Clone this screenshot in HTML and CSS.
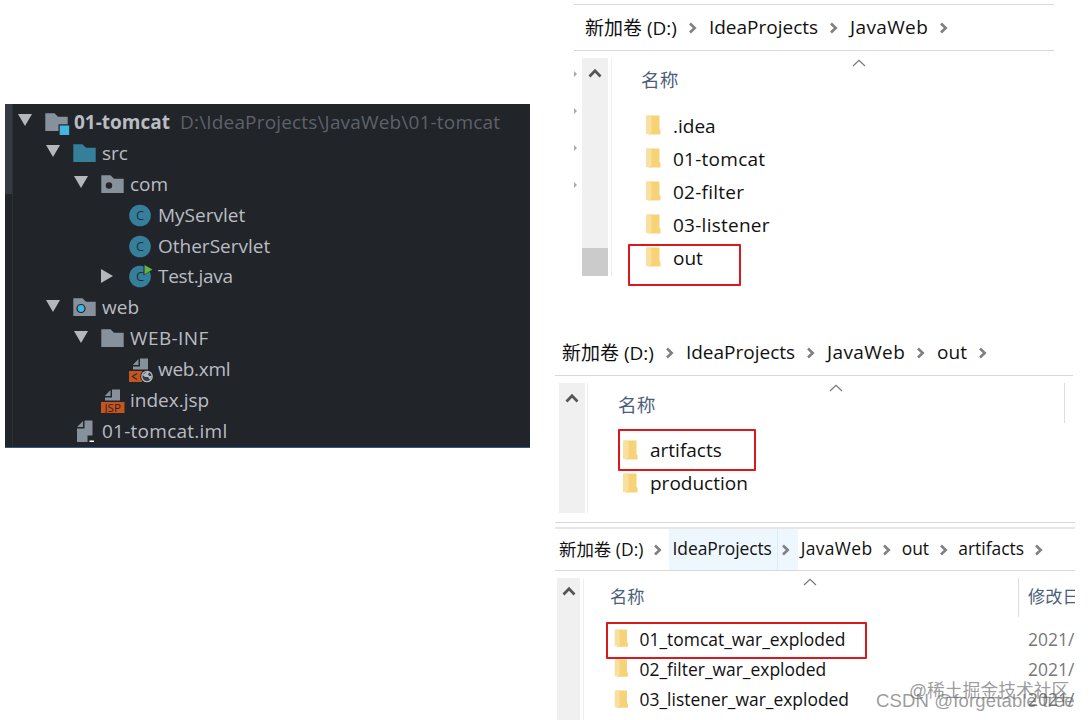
FILE: index.html
```html
<!DOCTYPE html>
<html lang="zh">
<head>
    <meta charset="UTF-8">
    <meta name="viewport" content="width=device-width, initial-scale=1.0">
    <title>01-tomcat</title>
    <link rel="stylesheet" href="styles.css">
</head>
<body>
    <!-- Icons -->
    <svg class="defs">
        <symbol id="down" viewBox="0 0 14 14"><path d="M0 1h14L7 13z" fill="#b4b8bc"/></symbol>
        <symbol id="right" viewBox="0 0 14 14"><path d="M0 0v14l12-7z" fill="#b4b8bc"/></symbol>
        <symbol id="dir" viewBox="0 0 24 24"><path d="M.3 3.3H9.500l3.500 3.500h9.700V21H.3z"/></symbol>
        <symbol id="class" viewBox="0 0 24 24">
            <circle cx="11" cy="12.500" r="10.800" fill="#357f9b"/>
            <text x="11" y="17.200" font-size="13" text-anchor="middle" fill="#20303a">C</text>
        </symbol>
        <symbol id="doc" viewBox="0 0 24 24"><path d="M11 1.500h8V12.500H4V9.500h7zM9.500 2v6H3.800z"/></symbol>
        <symbol id="folder" viewBox="0 0 15 21">
            <path d="M1 .500h12.500V14l1 1v4.500H3z" fill="#f5d376"/>
            <path d="M0 .500h3l2.500 1.500V17L3 20.800 2.500 19H0z" fill="#f9e0a0"/>
        </symbol>
        <symbol id="chev" viewBox="0 0 8 12"><path d="M1 1.500L5.700 6 1 10.500" fill="none" stroke="#808080" stroke-width="2.600"/></symbol>
        <symbol id="up" viewBox="0 0 14 10"><path d="M1.500 8.500L7 2.800l5.500 5.700" fill="none" stroke="#555" stroke-width="2.700"/></symbol>
        <symbol id="caret" viewBox="0 0 14 8"><path d="M1 7l6-5.700L13 7" fill="none" stroke="#777" stroke-width="1.200"/></symbol>
    </svg>

    <div class="container">
        <!-- Project tree -->
        <section class="project">
            <ul class="tree">
                <li>
                    <svg class="arrow"><use href="#down"/></svg>
                    <svg class="icon"><use href="#dir"/><path d="M13.500 14.300H24V24H13.500z" fill="#212429"/><path d="M14.700 15.500h9.500V25h-9.500z" fill="#40b6e0"/></svg>
                    <b>01-tomcat</b><span class="path">D:\IdeaProjects\JavaWeb\01-tomcat</span>
                </li>
                <li class="l1">
                    <svg class="arrow"><use href="#down"/></svg>
                    <svg class="icon source"><use href="#dir"/></svg>
                    <span>src</span>
                </li>
                <li class="l2">
                    <svg class="arrow"><use href="#down"/></svg>
                    <svg class="icon"><use href="#dir"/><circle cx="8" cy="13.500" r="3.200" fill="#212429"/></svg>
                    <span>com</span>
                </li>
                <li class="l3"><i class="arrow"></i><svg class="icon"><use href="#class"/></svg><span>MyServlet</span></li>
                <li class="l3"><i class="arrow"></i><svg class="icon"><use href="#class"/></svg><span>OtherServlet</span></li>
                <li class="l3">
                    <svg class="arrow closed"><use href="#right"/></svg>
                    <svg class="icon"><use href="#class"/><path d="M14.500 0v11.500L24 5.500z" fill="#212429"/><path d="M15.500 1v9.500l8-5z" fill="#62b543"/></svg>
                    <span class="java">Test.java</span>
                </li>
                <li class="l1">
                    <svg class="arrow"><use href="#down"/></svg>
                    <svg class="icon"><use href="#dir"/><circle cx="8" cy="13.500" r="4" fill="#40b6e0" stroke="#212429" stroke-width="1.200"/></svg>
                    <span>web</span>
                </li>
                <li class="l2">
                    <svg class="arrow"><use href="#down"/></svg>
                    <svg class="icon"><use href="#dir"/></svg>
                    <span class="inf">WEB-INF</span>
                </li>
                <li class="l3">
                    <i class="arrow"></i>
                    <svg class="icon">
                        <use href="#doc"/>
                        <path d="M0 14h13v11H0z" fill="#c4551f"/>
                        <path d="M8 16.500l-4.500 3L8 22.500" fill="none" stroke="#3a2a22" stroke-width="1.300"/>
                        <circle cx="18" cy="19.500" r="6.700" fill="#212429"/>
                        <circle cx="18" cy="19.500" r="5.200" fill="#343a41" stroke="#b2b8be" stroke-width="1.300"/>
                        <path d="M13.500 18l4-3h3l-1.500 2.500 1.500 1.500h2.500l-2 4-2-3h-3z" fill="#b2b8be"/>
                    </svg>
                    <span class="xml">web.xml</span>
                </li>
                <li class="l2">
                    <i class="arrow"></i>
                    <svg class="icon">
                        <use href="#doc"/>
                        <path d="M0 14h23.500v11H0z" fill="#c4551f"/>
                        <text x="11.700" y="23.500" font-size="11.500" text-anchor="middle" fill="#33231c">JSP</text>
                    </svg>
                    <span>index.jsp</span>
                </li>
                <li class="l1">
                    <i class="arrow"></i>
                    <svg class="icon"><path d="M11.500 1.500h8v15h-5V23H4V9.500h7.500zM10 2v6H4z"/><path d="M16.500 21.500h4.500v1.500h-4.500z" fill="#fff"/></svg>
                    <span class="iml">01-tomcat.iml</span>
                </li>
            </ul>
        </section>

        <!-- Explorer windows -->
        <div class="windows">
            <section class="window first">
                <nav>
                    <span>新加卷 (D:)</span><svg><use href="#chev"/></svg>
                    <span>IdeaProjects</span><svg><use href="#chev"/></svg>
                    <span class="jw">JavaWeb</span><svg><use href="#chev"/></svg>
                </nav>
                <div class="content">
                    <div class="ticks"><i></i><i></i><i></i><i></i></div>
                    <div class="scroll"><svg><use href="#up"/></svg><div class="thumb"></div></div>
                    <div class="files">
                        <h2>名称</h2>
                        <svg class="caret"><use href="#caret"/></svg>
                        <ul>
                            <li><svg><use href="#folder"/></svg>.idea</li>
                            <li><svg><use href="#folder"/></svg><span class="wide">01-tomcat</span></li>
                            <li><svg><use href="#folder"/></svg><span class="wide">02-filter</span></li>
                            <li><svg><use href="#folder"/></svg><span class="wide">03-listener</span></li>
                            <li class="marked"><svg><use href="#folder"/></svg>out</li>
                        </ul>
                    </div>
                </div>
            </section>

            <section class="window second">
                <nav>
                    <span>新加卷 (D:)</span><svg><use href="#chev"/></svg>
                    <span>IdeaProjects</span><svg><use href="#chev"/></svg>
                    <span class="jw">JavaWeb</span><svg><use href="#chev"/></svg>
                    <span>out</span><svg><use href="#chev"/></svg>
                </nav>
                <div class="content">
                    <div class="scroll"><svg><use href="#up"/></svg></div>
                    <div class="files">
                        <h2>名称</h2>
                        <svg class="caret"><use href="#caret"/></svg>
                        <ul>
                            <li class="marked"><svg><use href="#folder"/></svg>artifacts</li>
                            <li><svg><use href="#folder"/></svg>production</li>
                        </ul>
                    </div>
                    <div class="column"></div>
                </div>
            </section>

            <section class="window third">
                <nav>
                    <span>新加卷 (D:)</span><svg><use href="#chev"/></svg>
                    <div class="hover"><span>IdeaProjects</span><svg><use href="#chev"/></svg></div>
                    <span class="jw">JavaWeb</span><svg><use href="#chev"/></svg>
                    <span>out</span><svg><use href="#chev"/></svg>
                    <span>artifacts</span><svg><use href="#chev"/></svg>
                </nav>
                <div class="content">
                    <div class="scroll"><svg><use href="#up"/></svg></div>
                    <div class="files">
                        <h2>名称</h2>
                        <svg class="caret"><use href="#caret"/></svg>
                        <ul>
                            <li class="marked"><svg><use href="#folder"/></svg>01_tomcat_war_exploded</li>
                            <li><svg><use href="#folder"/></svg>02_filter_war_exploded</li>
                            <li><svg><use href="#folder"/></svg>03_listener_war_exploded</li>
                        </ul>
                    </div>
                    <div class="dates">
                        <h2>修改日</h2>
                        <ul>
                            <li>2021/</li>
                            <li>2021/</li>
                            <li>2021/</li>
                        </ul>
                    </div>
                </div>
            </section>
        </div>

        <div class="watermark juejin">@稀土掘金技术社区</div>
        <div class="watermark csdn">CSDN @forgetable tree</div>
    </div>
</body>
</html>
```

FILE: styles.css
```css
* {
    margin: 0;
    padding: 0;
    box-sizing: border-box;
}

body {
    font-family: "Open Sans", "Noto Sans CJK SC", sans-serif;
    font-size: 19px;
    color: #111;
    background: #fff;
}

ul {
    list-style: none;
}

svg {
    flex: none;
    overflow: visible;
}

.defs {
    display: none;
}

.container {
    position: relative;
    display: flex;
    align-items: flex-start;
    width: 1090px;
    height: 720px;
    padding-left: 5px;
    overflow: hidden;
}

/* Project tree */
.project {
    flex: none;
    width: 525px;
    height: 344px;
    margin-top: 104px;
    padding-top: 2.5px;
    background: linear-gradient(#343943, #343943) 0 0 / 7px 90px no-repeat,
                linear-gradient(#2b3036, #2b3036) 7px 0 / 1px 100% no-repeat,
                #212429;
    border-bottom: 1px solid #35578a;
    color: #b9bdc2;
}

.tree li {
    display: flex;
    align-items: center;
    height: 30.9px;
    padding-left: 13px;
    white-space: nowrap;
}

.tree .l1 {
    padding-left: 41px;
}

.tree .l2 {
    padding-left: 69px;
}

.tree .l3 {
    padding-left: 97px;
}

.arrow {
    flex: none;
    width: 14px;
    height: 14px;
    margin: -3px 13px 0 0;
}

.arrow.closed {
    margin: 0 14px 0 -1px;
}

.icon {
    width: 24px;
    height: 24px;
    margin-right: 5px;
    fill: #87919b;
}

.icon.source {
    fill: #357f9b;
}

.tree b {
    margin-right: 10px;
}

.path {
    color: #5d626a;
    letter-spacing: .17px;
}

.java,
.xml {
    letter-spacing: -.3px;
}

.inf {
    letter-spacing: .4px;
}

.iml {
    letter-spacing: .25px;
}

/* Explorer windows */
.windows {
    width: 545px;
    padding: 4px 0 0 25px;
}

.window nav {
    display: flex;
    align-items: center;
    gap: 12px;
    white-space: nowrap;
    border-bottom: 1px solid #d9d9d9;
}

.window nav svg {
    width: 8px;
    height: 12px;
    margin-top: 3px;
}

.jw {
    letter-spacing: .35px;
}

.wide {
    letter-spacing: .25px;
}

.content {
    display: flex;
}

.scroll {
    display: flex;
    flex-direction: column;
    align-items: center;
    justify-content: space-between;
    flex: none;
    width: 26px;
    background: #f0f0f0;
}

.scroll svg {
    width: 14px;
    height: 10px;
    margin-top: 10px;
}

.thumb {
    width: 100%;
    height: 28px;
    background: #cbcbcb;
}

.files {
    position: relative;
    flex: 1;
    margin-left: 3px;
    padding-left: 30px;
    border-left: 1px solid #eee;
}

.window h2 {
    height: 44px;
    font-size: 18.7px;
    font-weight: 400;
    line-height: 44px;
    color: #4c607a;
    white-space: nowrap;
}

.caret {
    position: absolute;
    top: 1px;
    width: 14px;
    height: 8px;
}

.files li {
    position: relative;
    display: flex;
    align-items: center;
    gap: 12px;
    height: 33px;
    padding-left: 5px;
    white-space: nowrap;
}

.files li svg {
    width: 15px;
    height: 21px;
}

/* Red frame around the folder being pointed out */
.marked::after {
    content: "";
    position: absolute;
    box-sizing: border-box;
    border: 2px solid #d9191c;
    border-radius: 1px;
}

.first {
    width: 480px;
    margin-left: 19px;
    border-top: 1px solid #d9d9d9;
}

.first nav {
    height: 46px;
    padding: 0 0 2px 11px;
}

.first .content {
    height: 218px;
    margin-top: 7px;
}

.first .files {
    padding-left: 29px;
}

.first ul {
    margin-top: 7px;
}

.first .caret {
    left: 240px;
}

.first .marked::after {
    top: 3px;
    left: -13px;
    width: 113px;
    height: 42px;
}

.ticks {
    display: flex;
    flex-direction: column;
    gap: 31px;
    width: 8px;
    padding-top: 13px;
}

.ticks i {
    height: 6px;
    width: 3px;
    background: #aaa;
    clip-path: polygon(0 0, 100% 50%, 0 100%);
}

.second {
    width: 518px;
    margin-top: 53px;
}

.second nav {
    height: 47px;
    padding: 0 0 1px 7px;
}

.second .content {
    height: 130px;
    margin: 7px 0 0 4px;
}

.second .files {
    margin-left: 2px;
}

.second ul {
    margin-top: 6.5px;
}

.second .caret {
    left: 241px;
}

.second .marked::after {
    top: -5px;
    left: 0;
    width: 138px;
    height: 42px;
}

.second .column {
    width: 9px;
    height: 40px;
    border-left: 1px solid #ddd;
}

.third {
    width: 520px;
    height: 198px;
    margin-top: 9px;
    padding-top: 4px;
    overflow: hidden;
    border-top: 1px solid #d9d9d9;
    font-size: 17.45px;
}

.third nav {
    height: 44px;
    padding: 0 0 3px 4px;
    gap: 10.6px;
    border-top: 2px solid #e6e6e6;
}

.hover {
    display: flex;
    align-items: center;
    gap: 10px;
    align-self: stretch;
    width: 129px;
    margin: 0 -7.5px -3px -4px;
    padding: 0 0 3px 4px;
    letter-spacing: -.08px;
    background: linear-gradient(#d9ecfa, #d9ecfa) 108px 0 / 1px 100% no-repeat, #eef7fe;
}

.third .content {
    height: 160px;
    margin: 7px 0 0 2px;
}

.third .scroll {
    width: 23px;
}

.third .scroll svg {
    margin-top: 8px;
}

.third .files {
    padding-left: 26px;
}

.third h2 {
    height: 39px;
    font-size: 17.2px;
    line-height: 38px;
}

.third ul {
    margin-top: 6.5px;
}

.third .files li {
    height: 30.3px;
    gap: 10.5px;
    padding-left: 4px;
}

.third .files li svg {
    height: 19px;
}

.third .caret {
    top: 0;
    left: 219px;
}

.third .marked::after {
    top: -2px;
    left: -4px;
    width: 261px;
    height: 37px;
}

.dates {
    flex: none;
    width: 57px;
    overflow: hidden;
    background: linear-gradient(#ddd, #ddd) 0 0 / 1px 39px no-repeat;
    padding-left: 10px;
    color: #777;
}

.dates li {
    height: 30.3px;
    line-height: 30.3px;
}

.watermark {
    position: absolute;
    color: rgba(90, 90, 90, .62);
    white-space: nowrap;
    font-family: "Liberation Sans", "Noto Sans CJK SC", sans-serif;
}

.juejin {
    top: 676px;
    left: 909px;
    font-size: 17.8px;
}

.csdn {
    top: 690px;
    left: 876px;
    font-size: 18.5px;
    letter-spacing: .15px;
}
```
